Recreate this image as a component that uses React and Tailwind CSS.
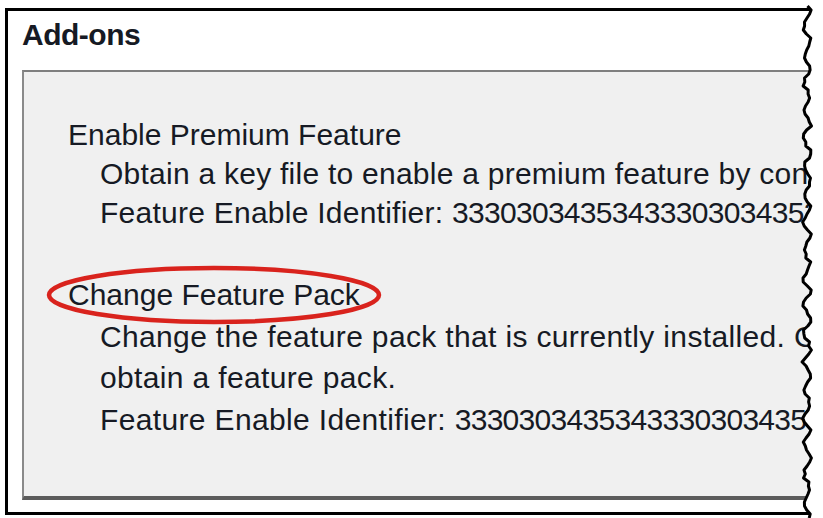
import React from 'react';

// torn right edge of the cropped dialog
const TORN = (() => {
  const pts = [];
  let seed = 11;
  const rnd = () => {
    seed = (seed * 9301 + 49297) % 233280;
    return seed / 233280;
  };
  for (let y = 6, i = 0; y <= 520; y += 4, i++) {
    const wave = Math.sin(i * 0.9) * 3.4;
    const jitter = (rnd() - 0.5) * 3.6;
    pts.push([14 + wave + jitter, y]);
  }
  return pts;
})();

const TornEdge = () => {
  const line = TORN.map(([x, y], i) => `${i ? 'L' : 'M'}${x.toFixed(1)} ${y}`).join(' ');
  const fill = `${line} L30 520 L30 6 Z`;
  return (
    <svg className="absolute right-0 top-0" width="30" height="518" viewBox="0 0 30 518">
      <path d={fill} fill="#ffffff" />
      <path d={line} fill="none" stroke="#000" strokeWidth="3" strokeLinejoin="round" />
    </svg>
  );
};

const Identifier = () => (
  <div>
    Feature Enable Identifier: <span className="tracking-[-0.7px]">333030343534333030343535</span>
  </div>
);

export default function App() {
  return (
    <div className="relative w-[823px] h-[518px] bg-white overflow-hidden font-['Liberation_Sans',Arial,sans-serif] text-[#161a24]">
      <div className="pt-[8px] pl-[5px]">
        <div className="w-[812px] h-[507px] border-l-[3px] border-t-[3px] border-b-[3px] border-black overflow-hidden">
          <div className="pt-[9px] pl-[14px] text-[30px] leading-[30px] font-bold tracking-[-0.5px]">Add-ons</div>
          <div className="relative mt-[20px] ml-[14px] h-[430px] bg-[#f0f0f0] border-l-2 border-t-2 border-b-4 border-l-[#8a8a8a] border-t-[#7f7f7f] border-b-[#5c5c5c] text-[30px] whitespace-nowrap">
            <div className="pt-[43px] pl-[44px] leading-[39px]">
              <div>Enable Premium Feature</div>
              <div className="pl-[32px] tracking-[0.25px]">
                <div>Obtain a key file to enable a premium feature by contacting your storage vendor.</div>
                <Identifier />
              </div>
            </div>
            <div className="mt-[42px] pl-[44px] leading-[41.5px]">
              <div>Change Feature Pack</div>
              <div className="pl-[32px] tracking-[0.35px]">
                <div>Change the feature pack that is currently installed. Contact your storage vendor to</div>
                <div>obtain a feature pack.</div>
                <Identifier />
              </div>
            </div>
            <svg className="absolute left-[22px] top-[193px]" width="340" height="62" viewBox="0 0 340 62">
              <ellipse cx="168" cy="30" rx="165" ry="27" fill="none" stroke="#d9231d" strokeWidth="4.5" />
            </svg>
          </div>
        </div>
      </div>
      <TornEdge />
    </div>
  );
}
